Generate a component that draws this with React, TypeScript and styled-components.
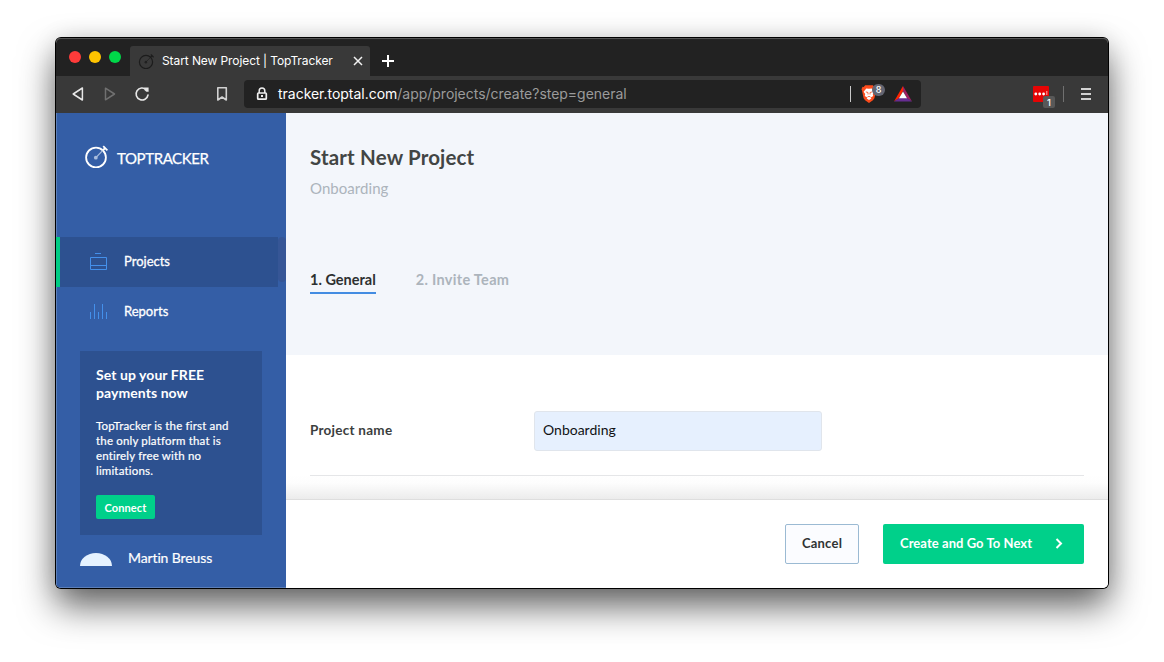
import React from 'react';
import styled, { createGlobalStyle } from 'styled-components';

const GlobalStyle = createGlobalStyle`
  * { box-sizing: border-box; }
  body { margin: 0; background: #fff; overflow: hidden; }
  button, input { font: inherit; }
`;

const uiFont = `Lato, "Open Sans", sans-serif`;
const chromeFont = `Inter, Roboto, sans-serif`;

const Desktop = styled.div`
  height: 662px;
  padding: 38px 56px 0;
  overflow: hidden;
  font-family: ${uiFont};
`;

const BrowserWindow = styled.div`
  width: 1052px;
  height: 550px;
  display: flex;
  flex-direction: column;
  border-radius: 5px;
  box-shadow: 0 0 0 1px #000, 0 18px 36px rgba(0, 0, 0, 0.62), 0 0 24px rgba(0, 0, 0, 0.1);
`;

const TabStrip = styled.div`
  height: 38px;
  flex: none;
  display: flex;
  align-items: flex-end;
  background: #222;
  border-radius: 5px 5px 0 0;
  box-shadow: inset 0 1px 0 #545454;
`;

const Lights = styled.div`
  display: flex;
  gap: 8px;
  padding: 0 9px 13px 13px;
`;

const Light = styled.span<{ $color: string }>`
  width: 12px;
  height: 12px;
  border-radius: 50%;
  background: ${(p) => p.$color};
`;

const Tab = styled.div`
  width: 240px;
  height: 30px;
  display: flex;
  align-items: center;
  padding: 0 7px 0 8px;
  border-radius: 3px 3px 0 0;
  background: #393939;
  color: #fff;
  font: 400 12px ${chromeFont};
  letter-spacing: -0.09px;
`;

const TabTitle = styled.span`
  flex: 1;
  margin-left: 8px;
  padding-bottom: 2px;
  white-space: nowrap;
`;

const NewTab = styled.span`
  display: flex;
  padding: 0 0 9px 12px;
`;

const Toolbar = styled.div`
  height: 37px;
  flex: none;
  display: flex;
  align-items: center;
  padding-bottom: 1px;
  background: #393939;
`;

const NavButtons = styled.div`
  width: 188px;
  display: flex;
  align-items: center;
  padding-left: 15px;
`;

const NavIcon = styled.span<{ $gap: number }>`
  display: flex;
  margin-right: ${(p) => p.$gap}px;
`;

const AddressBar = styled.div`
  width: 677px;
  height: 28px;
  display: flex;
  align-items: center;
  padding: 0 9px 0 12px;
  border-radius: 4px;
  background: #222;
`;

const Address = styled.span`
  flex: 1;
  margin-left: 10px;
  padding-bottom: 2px;
  font: 400 14px ${chromeFont};
  letter-spacing: -0.02px;
  color: #9b9b9b;
  white-space: nowrap;
`;

const Host = styled.span`
  color: #fff;
`;

const Separator = styled.span<{ $color: string }>`
  width: 1px;
  height: 16px;
  background: ${(p) => p.$color};
`;

const Extension = styled.span<{ $ml: number }>`
  position: relative;
  display: flex;
  margin-left: ${(p) => p.$ml}px;
`;

const ShieldCount = styled.span`
  position: absolute;
  left: 11px;
  top: -1px;
  width: 13px;
  height: 12px;
  border-radius: 6px;
  background: #636572;
  color: #fff;
  font: 500 9px/12px ${chromeFont};
  text-align: center;
`;

const ExtensionCount = styled.span`
  position: absolute;
  left: 10px;
  top: 10px;
  width: 12px;
  height: 12px;
  border-radius: 2px;
  background: #585858;
  color: #fff;
  font: 500 9.5px/13px ${chromeFont};
  text-align: center;
`;

const ToolbarEnd = styled.div`
  flex: 1;
  display: flex;
  align-items: center;
  justify-content: flex-end;
  padding-right: 17px;
`;

const Page = styled.div`
  flex: 1;
  min-height: 0;
  display: flex;
  overflow: hidden;
  border-radius: 0 0 5px 5px;
`;

const Sidebar = styled.aside`
  width: 230px;
  flex: none;
  display: flex;
  flex-direction: column;
  background: #345ea6;
  color: #fff;
  box-shadow: inset 1px -1px 0 #5c7fb9;
`;

const Brand = styled.div`
  height: 124px;
  display: flex;
  align-items: flex-start;
  padding: 31px 0 0 28px;
`;

const BrandName = styled.span`
  margin-left: 9px;
  font-size: 15px;
  line-height: 28px;
  letter-spacing: -0.4px;
  -webkit-text-stroke: 0.25px #fff;
`;

const NavArea = styled.div`
  display: flex;
  align-items: flex-start;
`;

const NavList = styled.nav`
  width: 222px;
`;

const NavItem = styled.div<{ $active?: boolean }>`
  height: 50px;
  display: flex;
  align-items: center;
  padding-left: 30px;
  border-left: 4px solid ${(p) => (p.$active ? '#00cc83' : 'transparent')};
  background: ${(p) => (p.$active ? '#2d5190' : 'transparent')};
  font-size: 13px;
`;

const NavLabel = styled.span`
  margin-left: 16px;
  padding-bottom: 2px;
  -webkit-text-stroke: 0.3px #fff;
`;

const ScrollThumb = styled.span`
  width: 8px;
  height: 45px;
  border-radius: 4px;
  background: #365696;
`;

const Promo = styled.section`
  width: 182px;
  height: 184px;
  margin: 14px 0 0 24px;
  padding: 15px 0 0 16px;
  background: #2d5190;
`;

const PromoTitle = styled.h3`
  margin: 0 0 16px;
  font-size: 14px;
  font-weight: 700;
  line-height: 18px;
  letter-spacing: 0.07px;
`;

const PromoText = styled.p`
  margin: 0 0 17px;
  font-size: 11.5px;
  line-height: 15px;
  letter-spacing: 0.17px;
  -webkit-text-stroke: 0.2px #fff;
`;

const Line = styled.span`
  display: block;
  white-space: nowrap;
`;

const ConnectButton = styled.button`
  display: block;
  width: 59px;
  height: 24px;
  padding: 0;
  border: 0;
  border-radius: 2px;
  background: #00d08a;
  color: #fff;
  font-size: 11px;
  font-weight: 700;
  line-height: 25px;
  letter-spacing: 0.1px;
`;

const Account = styled.div`
  display: flex;
  align-items: flex-start;
  height: 31px;
  margin: 8px 0 0 24px;
  font-size: 14px;
`;

const Avatar = styled.span`
  width: 32px;
  height: 13px;
  margin: 10px 16px 0 0;
  border-radius: 16px 16px 0 0 / 13px 13px 0 0;
  background: #e5f2ff;
`;

const AccountName = styled.span`
  line-height: 30px;
  letter-spacing: -0.12px;
  -webkit-text-stroke: 0.2px #fff;
`;

const Main = styled.main`
  flex: 1;
  display: flex;
  flex-direction: column;
  background: #fff;
`;

const PageHeader = styled.header`
  height: 242px;
  flex: none;
  padding: 30px 24px 0;
  background: #f3f6fb;
`;

const Title = styled.h1`
  margin: 0;
  font-size: 20.5px;
  font-weight: 700;
  line-height: 28px;
  letter-spacing: 0.16px;
  color: #424544;
`;

const Subtitle = styled.p`
  margin: 7px 0 0;
  font-size: 15px;
  line-height: 20px;
  letter-spacing: 0.05px;
  color: #acb4bc;
`;

const Steps = styled.div`
  display: flex;
  gap: 40px;
  margin-top: 71px;
`;

const Step = styled.span<{ $active?: boolean; $spacing: number }>`
  height: 25px;
  font-size: 14.5px;
  font-weight: 700;
  line-height: 21px;
  letter-spacing: ${(p) => p.$spacing}px;
  color: ${(p) => (p.$active ? '#2d3030' : '#acb4bc')};
  border-bottom: 2px solid ${(p) => (p.$active ? '#438ce2' : 'transparent')};
`;

const Form = styled.div`
  height: 144px;
  flex: none;
  padding: 56px 24px 0;
  background: linear-gradient(to bottom, #fff 120px, #fdfdfd 128px, #ececec 144px);
`;

const FieldRow = styled.label`
  display: flex;
  align-items: center;
  padding-bottom: 24px;
  border-bottom: 1px solid #e5e6e8;
`;

const FieldLabel = styled.span`
  width: 224px;
  padding-bottom: 2px;
  font-size: 13.5px;
  font-weight: 700;
  letter-spacing: 0.26px;
  color: #3b3e3e;
`;

const TextInput = styled.input`
  width: 288px;
  height: 40px;
  padding: 0 8px 3px;
  border: 1px solid #e0e5ec;
  border-radius: 3px;
  background: #e6f0fe;
  color: #101214;
  font-size: 14px;
  outline: none;
`;

const Footer = styled.footer`
  flex: 1;
  display: flex;
  justify-content: flex-end;
  gap: 24px;
  padding: 24px 24px 0 0;
  border-top: 1px solid #dedede;
`;

const Button = styled.button<{ $primary?: boolean }>`
  width: ${(p) => (p.$primary ? 201 : 74)}px;
  height: 40px;
  display: flex;
  align-items: center;
  justify-content: ${(p) => (p.$primary ? 'space-between' : 'center')};
  padding: ${(p) => (p.$primary ? '0 21px 2px 17px' : '0 0 2px')};
  border: ${(p) => (p.$primary ? '0' : '1px solid #9bbad3')};
  border-radius: 2px;
  background: ${(p) => (p.$primary ? '#00d08a' : '#fbfcff')};
  color: ${(p) => (p.$primary ? '#fff' : '#303434')};
  font-size: 13px;
  font-weight: 700;
  letter-spacing: ${(p) => (p.$primary ? 0.06 : 0.22)}px;
`;

const StopwatchIcon = ({ size, color, hub }: { size: number; color: string; hub: string }) => (
  <svg width={size} height={size} viewBox="0 0 24 24" fill="none">
    <circle cx="12" cy="13.5" r="9.9" stroke={color} strokeWidth="1.8" />
    <path d="M12 13.5 20 5.2" stroke={hub} strokeWidth="1.1" />
    <circle cx="11.8" cy="13.7" r="1.9" fill={hub} />
    <path d="M18.5 6.7 21.2 4M19.2 2.2l4.2 4.1" stroke={color} strokeWidth="1.8" />
  </svg>
);

const TriangleIcon = ({ color, flip }: { color: string; flip?: boolean }) => (
  <svg width="14" height="16" viewBox="0 0 14 16" fill="none">
    <path
      d={flip ? 'M2.5 2.2v11.6L11.5 8z' : 'M11.4 2v12L2.2 8z'}
      stroke={color}
      strokeWidth="1.5"
      strokeLinejoin="round"
    />
  </svg>
);

const ReloadIcon = () => (
  <svg width="16" height="16" viewBox="0 0 16 16" fill="none">
    <path d="M12.3 3.7A6 6 0 1 0 14 9" stroke="#e6e6e6" strokeWidth="1.6" strokeLinecap="round" />
    <path d="M10.4 1.6h4.2v4.2h-2.3l-1.9-1.9z" fill="#e6e6e6" />
  </svg>
);

const BookmarkIcon = () => (
  <svg width="12" height="16" viewBox="0 0 12 16" fill="none">
    <path d="M1.8 1.8h8.5v12.2L6.05 11 1.8 14z" stroke="#d2d2d2" strokeWidth="1.6" strokeLinejoin="round" />
  </svg>
);

const LockIcon = () => (
  <svg width="12" height="14" viewBox="0 0 12 14" fill="none">
    <path d="M3.2 6V3.7a2.8 2.8 0 0 1 5.6 0V6" stroke="#eee" strokeWidth="1.5" />
    <rect x="1.7" y="6" width="8.6" height="6.2" rx=".8" stroke="#eee" strokeWidth="1.7" />
    <rect x="5" y="8" width="2" height="2" fill="#eee" />
  </svg>
);

const LionIcon = () => (
  <svg width="16" height="18" viewBox="0 0 16 18">
    <path d="M4.2.3h7.6l1.5 1.6 1.2-.1 1 2.4-.6 1.8-1.5 7.3-1.5 2L8 18l-3.9-2.7-1.5-2L1.1 6 .5 4.2l1-2.4 1.2.1z" fill="#fb4b1c" />
    <path d="M8 3.8 5.3 3.4 2.6 6.7 4.2 9 3.8 10.9 6.2 12.4 5.7 13.5 8 15.1 10.3 13.5 9.8 12.4 12.2 10.9 11.8 9 13.4 6.7 10.7 3.4z" fill="#fff" />
    <path d="M4.8 6.9 7 7.5 7 9.5M9 9.5 9 7.5 11.2 6.9M6.4 12.1 8 11.3 9.6 12.1" fill="none" stroke="#fb4b1c" strokeWidth=".8" />
  </svg>
);

const RewardsIcon = () => (
  <svg width="18" height="16" viewBox="0 0 18 16">
    <path d="M9 0 0 15.5 5 12.3 9 5z" fill="#ff2500" />
    <path d="M9 0l9 15.5-5-3.2L9 5z" fill="#9e1f63" />
    <path d="M0 15.5h18l-5-3.5H5z" fill="#662d91" />
    <path d="m9 5.5 4 6.8H5z" fill="#fff" />
  </svg>
);

const DotsIcon = () => (
  <svg width="16" height="16" viewBox="0 0 16 16">
    <rect width="16" height="16" rx="1" fill="#e60404" />
    <circle cx="2.8" cy="8" r="1.4" fill="#fff" />
    <circle cx="6.7" cy="8" r="1.4" fill="#fff" />
    <circle cx="10.6" cy="8" r="1.4" fill="#fff" />
    <path d="M13.8 5v4" stroke="#ff9d9d" strokeWidth="1.1" />
  </svg>
);

const BriefcaseIcon = () => (
  <svg width="18" height="18" viewBox="0 0 18 18" fill="none" stroke="#4490eb">
    <path d="M5 .5h6M.5 4.5h16v12H.5zM.5 12.5h16" />
  </svg>
);

const BarsIcon = () => (
  <svg width="18" height="16" viewBox="0 0 18 16" fill="none" stroke="#4490eb">
    <path d="M.5 8v7M4.5 0v15M8.5 8v7M12.5 0v15M16.5 8v7" />
  </svg>
);

export default function App() {
  return (
    <Desktop>
      <GlobalStyle />
      <BrowserWindow>
        <TabStrip>
          <Lights>
            <Light $color="#ff3b3a" />
            <Light $color="#ffc400" />
            <Light $color="#00d749" />
          </Lights>
          <Tab>
            <StopwatchIcon size={16} color="#1c1c1c" hub="#202020" />
            <TabTitle>Start New Project | TopTracker</TabTitle>
            <svg width="10" height="10" viewBox="0 0 10 10" stroke="#f2f2f2" strokeWidth="1.5">
              <path d="m1 1 8 8M9 1 1 9" />
            </svg>
          </Tab>
          <NewTab>
            <svg width="12" height="12" viewBox="0 0 12 12" stroke="#fff" strokeWidth="2">
              <path d="M6 0v12M0 6h12" />
            </svg>
          </NewTab>
        </TabStrip>
        <Toolbar>
          <NavButtons>
            <NavIcon $gap={18}><TriangleIcon color="#e6e6e6" /></NavIcon>
            <NavIcon $gap={17}><TriangleIcon color="#707070" flip /></NavIcon>
            <NavIcon $gap={66}><ReloadIcon /></NavIcon>
            <BookmarkIcon />
          </NavButtons>
          <AddressBar>
            <LockIcon />
            <Address><Host>tracker.toptal.com</Host>/app/projects/create?step=general</Address>
            <Separator $color="#c9c9c9" />
            <Extension $ml={10}>
              <LionIcon />
              <ShieldCount>8</ShieldCount>
            </Extension>
            <Extension $ml={17}><RewardsIcon /></Extension>
          </AddressBar>
          <ToolbarEnd>
            <Extension $ml={0}>
              <DotsIcon />
              <ExtensionCount>1</ExtensionCount>
            </Extension>
            <Extension $ml={14}><Separator $color="#707070" /></Extension>
            <Extension $ml={17}>
              <svg width="10" height="12" viewBox="0 0 10 12" stroke="#d2d2d2" strokeWidth="2">
                <path d="M0 1h10M0 6h10M0 11h10" />
              </svg>
            </Extension>
          </ToolbarEnd>
        </Toolbar>
        <Page>
          <Sidebar>
            <Brand>
              <StopwatchIcon size={24} color="#fff" hub="#a9bddd" />
              <BrandName>TOPTRACKER</BrandName>
            </Brand>
            <NavArea>
              <NavList>
                <NavItem $active>
                  <BriefcaseIcon />
                  <NavLabel>Projects</NavLabel>
                </NavItem>
                <NavItem>
                  <BarsIcon />
                  <NavLabel>Reports</NavLabel>
                </NavItem>
              </NavList>
              <ScrollThumb />
            </NavArea>
            <Promo>
              <PromoTitle>
                <Line>Set up your FREE</Line>
                <Line>payments now</Line>
              </PromoTitle>
              <PromoText>
                <Line>TopTracker is the first and</Line>
                <Line>the only platform that is</Line>
                <Line>entirely free with no</Line>
                <Line>limitations.</Line>
              </PromoText>
              <ConnectButton>Connect</ConnectButton>
            </Promo>
            <Account>
              <Avatar />
              <AccountName>Martin Breuss</AccountName>
            </Account>
          </Sidebar>
          <Main>
            <PageHeader>
              <Title>Start New Project</Title>
              <Subtitle>Onboarding</Subtitle>
              <Steps>
                <Step $active $spacing={0}>1. General</Step>
                <Step $spacing={0.3}>2. Invite Team</Step>
              </Steps>
            </PageHeader>
            <Form>
              <FieldRow>
                <FieldLabel>Project name</FieldLabel>
                <TextInput defaultValue="Onboarding" />
              </FieldRow>
            </Form>
            <Footer>
              <Button>Cancel</Button>
              <Button $primary>
                Create and Go To Next
                <svg width="8" height="11" viewBox="0 0 8 11" fill="none" stroke="#fff" strokeWidth="2">
                  <path d="m1.5 1 4.5 4.5L1.5 10" />
                </svg>
              </Button>
            </Footer>
          </Main>
        </Page>
      </BrowserWindow>
    </Desktop>
  );
}
